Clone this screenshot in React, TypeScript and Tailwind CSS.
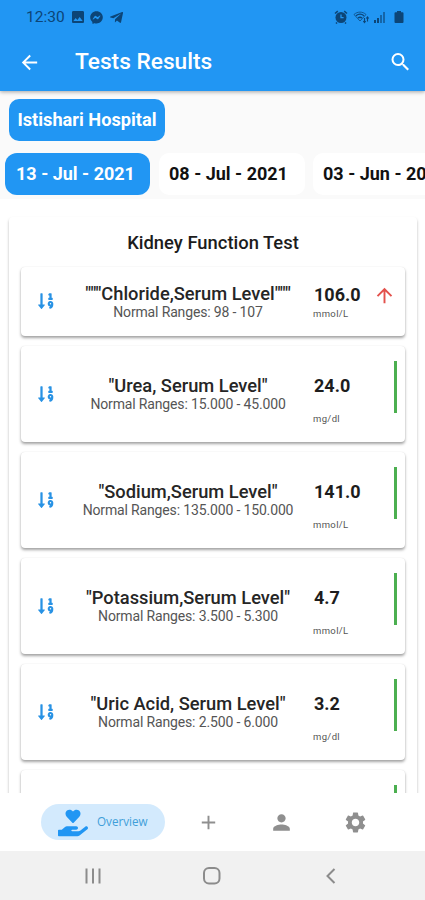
import React from "react";
import {
  MdAdd,
  MdArrowBack,
  MdArrowUpward,
  MdImage,
  MdPerson,
  MdSearch,
  MdSettings,
} from "react-icons/md";
import {
  FaFacebookMessenger,
  FaHandHoldingHeart,
  FaSortNumericDown,
  FaTelegramPlane,
} from "react-icons/fa";

type Result = {
  name: string;
  range: string;
  value: string;
  unit: string;
  high?: boolean;
};

const results: Result[] = [
  { name: '"""Chloride,Serum Level"""', range: "98 - 107", value: "106.0", unit: "mmol/L", high: true },
  { name: '"Urea, Serum Level"', range: "15.000 - 45.000", value: "24.0", unit: "mg/dl" },
  { name: '"Sodium,Serum Level"', range: "135.000 - 150.000", value: "141.0", unit: "mmol/L" },
  { name: '"Potassium,Serum Level"', range: "3.500 - 5.300", value: "4.7", unit: "mmol/L" },
  { name: '"Uric Acid, Serum Level"', range: "2.500 - 6.000", value: "3.2", unit: "mg/dl" },
];

function StatusBar() {
  return (
    <div className="flex h-[34px] items-center pl-[26px] pr-[21px] text-[#0c4577]">
      <span className="pt-[2px] text-[15.5px] leading-none">12:30</span>
      <MdImage className="ml-[5px] size-[16px]" />
      <FaFacebookMessenger className="ml-[4px] size-[13px]" />
      <FaTelegramPlane className="ml-[6px] size-[15px]" />
      <div className="ml-auto flex items-center">
        <svg width="14" height="14" viewBox="0 0 14 14" fill="none">
          <circle cx="7" cy="7.5" r="5.5" fill="currentColor" />
          <path d="M1 3.5 3.8 1.2M13 3.5 10.2 1.2M3 12.5l-1 1M11 12.5l1 1" stroke="currentColor" strokeWidth="1.6" />
          <path d="M7 4.5v3.2h2.6" stroke="#2196f3" strokeWidth="1.3" />
        </svg>
        <svg className="ml-[5px]" width="17" height="14" viewBox="0 0 17 14" fill="none" stroke="currentColor">
          <path d="M1 4.5C4.500 1.300 9.500 1.300 13 4.500L7 11Z" strokeWidth="1" opacity=".75" />
          <path d="M3 5.800C5.500 3.800 8.500 3.800 11 5.800M5 8c1.300-1 2.700-1 4 0" strokeWidth="1.300" />
          <path d="M11.500 8v4.500M14.500 7v4.500M10.300 11l1.200 1.500 1.200-1.500M13.300 8.500l1.200-1.500 1.200 1.500" strokeWidth="1.100" />
        </svg>
        <svg className="ml-[3px]" width="13" height="14" viewBox="0 0 13 14" fill="currentColor">
          <path d="M1 10h2v3H1zM4 8h2v5H4z" />
          <path d="M7 5h2v8H7zM10 2h2v11h-2z" opacity=".6" />
        </svg>
        <svg className="ml-[8px]" width="10" height="14" viewBox="0 0 10 14" fill="currentColor">
          <path d="M3 1h4v1.300H3zM1.500 2.300h7a1 1 0 0 1 1 1V12a1 1 0 0 1-1 1h-7a1 1 0 0 1-1-1V3.300a1 1 0 0 1 1-1z" />
        </svg>
      </div>
    </div>
  );
}

function AppBar() {
  return (
    <header className="relative z-10 h-[91px] shrink-0 bg-[#2196f3] shadow-[0_1px_4px_rgba(0,0,0,0.35)]">
      <StatusBar />
      <div className="flex h-[57px] items-center pl-[18px] pr-[12px] text-white">
        <MdArrowBack className="size-[23px]" />
        <h1 className="ml-[34px] text-[22.7px] font-medium leading-none">Tests Results</h1>
        <MdSearch className="ml-auto size-[25px] pb-px" />
      </div>
    </header>
  );
}

function ResultCard({ item }: { item: Result }) {
  return (
    <article
      className={`${item.high ? "h-[69px]" : "h-[96px]"} flex shrink-0 rounded-[4px] bg-white shadow-[0_2px_3px_rgba(0,0,0,0.36),0_0_1px_rgba(0,0,0,0.12)]`}
    >
      <div className="flex w-[50px] shrink-0 items-center justify-center pb-px">
        <FaSortNumericDown className="size-[18px] text-[#2892e4]" />
      </div>
      <div className={`flex w-[234px] shrink-0 flex-col items-center whitespace-nowrap ${item.high ? "pt-[16px]" : "pt-[29px]"}`}>
        <h3 className="text-[18.3px] font-medium leading-[21px] text-[#262626]">{item.name}</h3>
        <p className="text-[14px] leading-[17px] tracking-[-0.15px] text-[#555]">Normal Ranges: {item.range}</p>
      </div>
      <div className={`flex w-[64px] shrink-0 flex-col pl-[9px] ${item.high ? "pt-[17px]" : "pt-[29px]"}`}>
        <span className="text-[18px] font-bold leading-[21px] text-[#1d1d1d]">{item.value}</span>
        <span className={`-ml-px text-[9.5px] leading-[12px] tracking-[0.35px] text-[#555] ${item.high ? "mt-[3px]" : "mt-[17px]"}`}>{item.unit}</span>
      </div>
      {item.high ? (
        <MdArrowUpward className="ml-[4px] mt-[17px] size-[23px] text-[#e3514c]" />
      ) : (
        <span className="ml-auto mr-[8px] mt-[15px] h-[52px] w-[3px] bg-[#4caf50]" />
      )}
    </article>
  );
}

function PeekCard() {
  return (
    <article className="flex h-[96px] shrink-0 rounded-[4px] bg-white shadow-[0_2px_3px_rgba(0,0,0,0.36),0_0_1px_rgba(0,0,0,0.12)]">
      <span className="ml-auto mr-[8px] mt-[15px] h-[52px] w-[3px] bg-[#4caf50]" />
    </article>
  );
}

function BottomNav() {
  return (
    <nav className="flex h-[58px] shrink-0 items-center bg-white pl-[41px] text-[#8f8f8f]">
      <div className="flex h-[36px] w-[124px] items-center rounded-full bg-[#d3eafd] pl-[17px] text-[#2196f3]">
        <FaHandHoldingHeart className="mt-[2px] size-[30px]" />
        <span className="ml-[9px] pb-[2px] font-['Open_Sans',sans-serif] text-[11.7px] leading-[18px] text-[#3f9fd9]">Overview</span>
      </div>
      <MdAdd className="ml-[32px] size-[23px]" />
      <MdPerson className="ml-[49px] size-[25px]" />
      <MdSettings className="ml-[49px] size-[25px]" />
    </nav>
  );
}

function SystemNav() {
  return (
    <div className="flex h-[49px] shrink-0 items-center bg-[#f1f1f1] pl-[84px] text-[#8c8c8c]">
      <svg width="18" height="18" viewBox="0 0 18 18" stroke="currentColor" strokeWidth="2">
        <path d="M2.500 1.500v15M9 1.500v15M15.500 1.500v15" />
      </svg>
      <svg className="ml-[100px]" width="20" height="20" viewBox="0 0 20 20" fill="none" stroke="currentColor" strokeWidth="2">
        <rect x="2" y="2" width="15.500" height="15.500" rx="5" />
      </svg>
      <svg className="ml-[100px]" width="18" height="18" viewBox="0 0 18 18" fill="none" stroke="currentColor" strokeWidth="2">
        <path d="M12.500 2 5.500 9l7 7" />
      </svg>
    </div>
  );
}

export default function App() {
  return (
    <div className="flex h-[900px] w-[425px] flex-col overflow-hidden bg-white font-[Roboto,sans-serif]">
      <AppBar />
      <section className="h-[108px] shrink-0 overflow-hidden bg-[#fafafa] pt-[8px]">
        <div className="ml-[9px] flex h-[42px] w-[156px] items-center justify-center rounded-[10px] bg-[#2196f3] text-[18.2px] font-bold text-white">
          <span className="whitespace-nowrap">Istishari Hospital</span>
        </div>
        <div className="mt-[12px] flex whitespace-nowrap text-[18px] font-bold text-[#111]">
          <div className="ml-[5px] flex h-[42px] w-[145px] shrink-0 items-center rounded-[12px] bg-[#2196f3] pb-[2px] pl-[11px] text-white">13 - Jul - 2021</div>
          <div className="ml-[9px] flex h-[42px] w-[146px] shrink-0 items-center rounded-[10px] bg-white pb-[2px] pl-[10px]">08 - Jul - 2021</div>
          <div className="ml-[8px] flex h-[42px] w-[150px] shrink-0 items-center rounded-[10px] bg-white pb-[2px] pl-[10px]">03 - Jun - 2021</div>
        </div>
      </section>
      <main className="h-[594px] shrink-0 overflow-hidden bg-white pl-[9px] pr-[8px] pt-[18px]">
        <section className="flex h-[700px] flex-col rounded-[4px] bg-white px-[12px] shadow-[0_2px_3px_rgba(0,0,0,0.28)]">
          <h2 className="flex h-[50px] shrink-0 items-center justify-center pt-px text-[18.4px] font-medium text-[#1c1c1c]">Kidney Function Test</h2>
          <div className="flex flex-col gap-[10px]">
            {results.map((item) => (
              <ResultCard key={item.name} item={item} />
            ))}
            <PeekCard />
          </div>
        </section>
      </main>
      <BottomNav />
      <SystemNav />
    </div>
  );
}
